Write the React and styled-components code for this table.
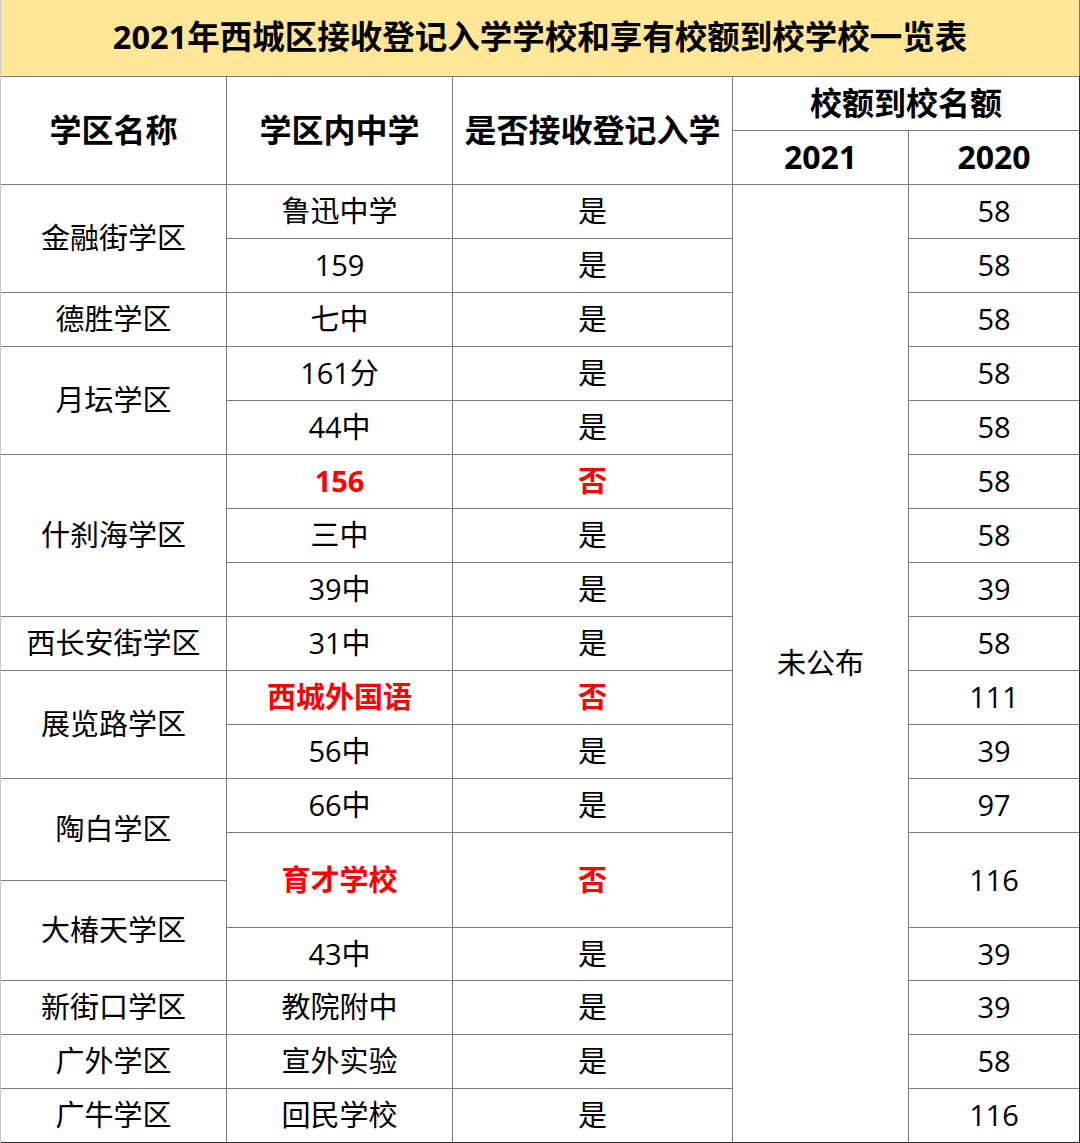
import React from "react";
import styled, { createGlobalStyle } from "styled-components";

const GlobalStyle = createGlobalStyle`
  html, body {
    margin: 0;
    padding: 0;
    background: #fff;
  }
  body {
    font-family: "Open Sans", "Noto Sans CJK SC", sans-serif;
  }
`;

const Table = styled.div`
  display: grid;
  width: 1080px;
  box-sizing: border-box;
  grid-template-columns: 225px 225px 279px 175px 170px;
  grid-template-rows:
    76px 53px 53px
    repeat(12, 53px)
    47px 46px 52px
    53px 53px 53px;
  gap: 1px;
  padding: 0 1px 1px 0;
  background: #7a7a7a;
  border-left: 1px solid #c8c8c8;
  position: relative;
  &::after {
    content: "";
    position: absolute;
    right: 0;
    top: 76px;
    bottom: 0;
    width: 1px;
    background: #2a2a2a;
  }
  &::before {
    content: "";
    position: absolute;
    left: 0;
    right: 0;
    bottom: 0;
    height: 1px;
    background: #2a2a2a;
  }
`;

const Cell = styled.div`
  grid-column: ${(p) => p.$col};
  grid-row: ${(p) => p.$row};
  background: ${(p) => (p.$yellow ? "#ffe699" : "#fff")};
  display: flex;
  align-items: center;
  justify-content: center;
  padding-bottom: 2px;
  font-size: ${(p) => (p.$big ? "32.5px" : p.$bold ? "32px" : "29px")};
  font-weight: ${(p) => (p.$bold || p.$red ? 700 : 400)};
  color: ${(p) => (p.$red ? "#ff0000" : "#000")};
  line-height: 1;
  white-space: nowrap;
`;

const districts = [
  { name: "金融街学区", row: "4 / 6" },
  { name: "德胜学区", row: "6" },
  { name: "月坛学区", row: "7 / 9" },
  { name: "什刹海学区", row: "9 / 12" },
  { name: "西长安街学区", row: "12" },
  { name: "展览路学区", row: "13 / 15" },
  { name: "陶白学区", row: "15 / 17" },
  { name: "大椿天学区", row: "17 / 19" },
  { name: "新街口学区", row: "19" },
  { name: "广外学区", row: "20" },
  { name: "广牛学区", row: "21" },
];

const schools = [
  { name: "鲁迅中学", ok: true, quota: 58, row: "4" },
  { name: "159", ok: true, quota: 58, row: "5" },
  { name: "七中", ok: true, quota: 58, row: "6" },
  { name: "161分", ok: true, quota: 58, row: "7" },
  { name: "44中", ok: true, quota: 58, row: "8" },
  { name: "156", ok: false, quota: 58, row: "9" },
  { name: "三中", ok: true, quota: 58, row: "10" },
  { name: "39中", ok: true, quota: 39, row: "11" },
  { name: "31中", ok: true, quota: 58, row: "12" },
  { name: "西城外国语", ok: false, quota: 111, row: "13" },
  { name: "56中", ok: true, quota: 39, row: "14" },
  { name: "66中", ok: true, quota: 97, row: "15" },
  { name: "育才学校", ok: false, quota: 116, row: "16 / 18" },
  { name: "43中", ok: true, quota: 39, row: "18" },
  { name: "教院附中", ok: true, quota: 39, row: "19" },
  { name: "宣外实验", ok: true, quota: 58, row: "20" },
  { name: "回民学校", ok: true, quota: 116, row: "21" },
];

const App = () => {
  return (
    <>
      <GlobalStyle />
      <Table>
        <Cell $col="1 / 6" $row="1" $yellow $bold $big>
          2021年西城区接收登记入学学校和享有校额到校学校一览表
        </Cell>

        <Cell $col="1" $row="2 / 4" $bold>学区名称</Cell>
        <Cell $col="2" $row="2 / 4" $bold>学区内中学</Cell>
        <Cell $col="3" $row="2 / 4" $bold>是否接收登记入学</Cell>
        <Cell $col="4 / 6" $row="2" $bold>校额到校名额</Cell>
        <Cell $col="4" $row="3" $bold>2021</Cell>
        <Cell $col="5" $row="3" $bold>2020</Cell>

        {districts.map((d) => (
          <Cell key={d.name} $col="1" $row={d.row}>
            {d.name}
          </Cell>
        ))}

        {schools.map((s) => (
          <React.Fragment key={s.name}>
            <Cell $col="2" $row={s.row} $red={!s.ok}>
              {s.name}
            </Cell>
            <Cell $col="3" $row={s.row} $red={!s.ok}>
              {s.ok ? "是" : "否"}
            </Cell>
            <Cell $col="5" $row={s.row}>
              {s.quota}
            </Cell>
          </React.Fragment>
        ))}

        <Cell $col="4" $row="4 / 22">未公布</Cell>
      </Table>
    </>
  );
};

export default App;
